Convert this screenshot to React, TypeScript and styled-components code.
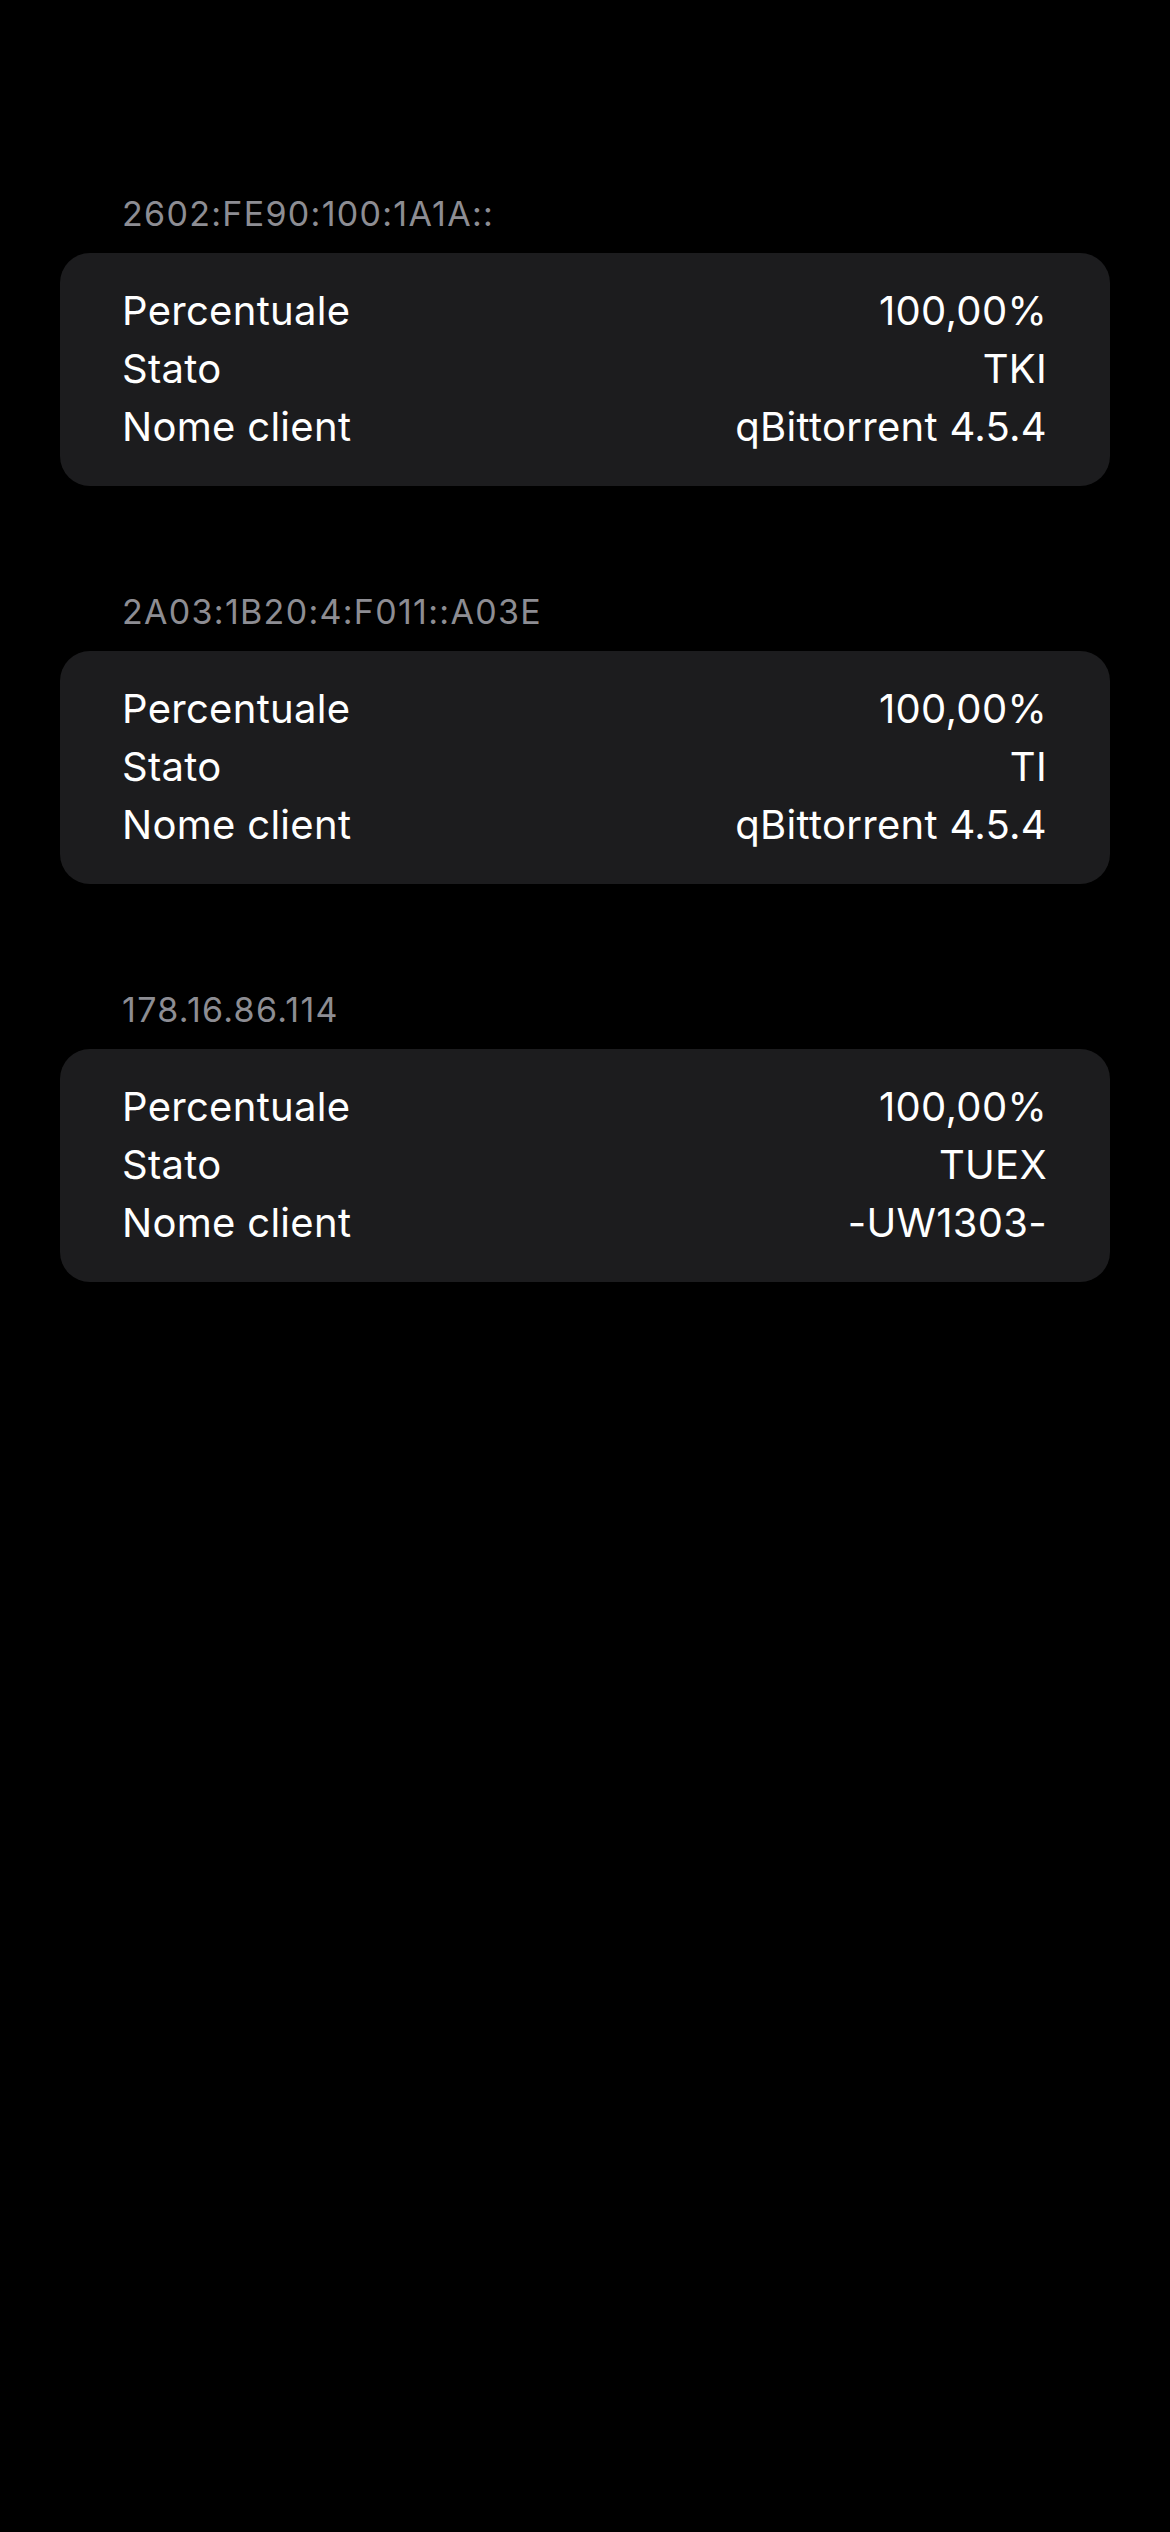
import React from "react";
import styled, { createGlobalStyle } from "styled-components";

const GlobalStyle = createGlobalStyle`
  html, body {
    margin: 0;
    padding: 0;
    background: #000000;
  }
  body {
    font-family: Inter, "Noto Sans", "Liberation Sans", sans-serif;
    -webkit-font-smoothing: antialiased;
  }
`;

const Page = styled.div`
  min-height: 2532px;
  background: #000000;
  padding: 194px 60px 0;
  box-sizing: border-box;
  display: flex;
  flex-direction: column;
  gap: 106px;
`;

const Section = styled.section`
  display: flex;
  flex-direction: column;
  gap: 19px;
`;

const SectionHeader = styled.div`
  padding-left: 62px;
  font-size: 34px;
  line-height: 40px;
  letter-spacing: 1.3px;
  color: #8d8d93;
  font-weight: 400;
`;

const Card = styled.div`
  background: #1c1c1e;
  border-radius: 30px;
  padding: 29px 63px 30px 62px;
  display: flex;
  flex-direction: column;
`;

const Row = styled.div`
  display: flex;
  justify-content: space-between;
  align-items: baseline;
  font-size: 40px;
  line-height: 58px;
  letter-spacing: 0.3px;
  color: #ffffff;
`;

const Label = styled.span``;
const Value = styled.span`
  text-align: right;
`;

type Peer = {
  ip: string;
  percent: string;
  state: string;
  client: string;
};

const peers: Peer[] = [
  { ip: "2602:FE90:100:1A1A::", percent: "100,00%", state: "TKI", client: "qBittorrent 4.5.4" },
  { ip: "2A03:1B20:4:F011::A03E", percent: "100,00%", state: "TI", client: "qBittorrent 4.5.4" },
  { ip: "178.16.86.114", percent: "100,00%", state: "TUEX", client: "-UW1303-" },
];

export default function App() {
  return (
    <>
      <GlobalStyle />
      <Page>
        {peers.map((p) => (
          <Section key={p.ip}>
            <SectionHeader>{p.ip}</SectionHeader>
            <Card>
              <Row>
                <Label>Percentuale</Label>
                <Value>{p.percent}</Value>
              </Row>
              <Row>
                <Label>Stato</Label>
                <Value>{p.state}</Value>
              </Row>
              <Row>
                <Label>Nome client</Label>
                <Value>{p.client}</Value>
              </Row>
            </Card>
          </Section>
        ))}
      </Page>
    </>
  );
}
